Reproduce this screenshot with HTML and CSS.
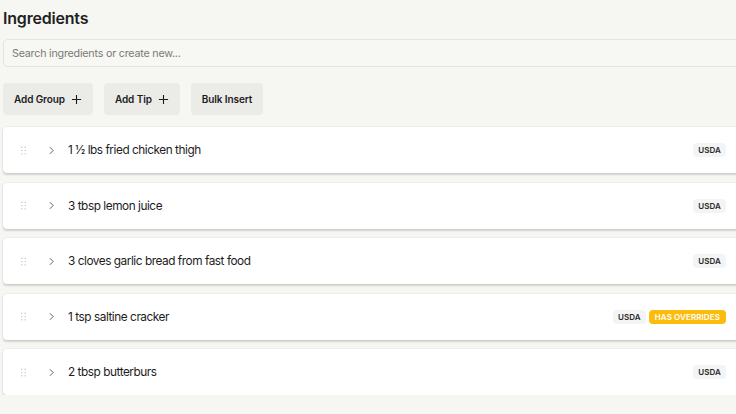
FILE: index.html
```html
<!DOCTYPE html>
<html lang="en">
<head>
  <meta charset="UTF-8" />
  <meta name="viewport" content="width=device-width, initial-scale=1" />
  <title>Ingredients</title>
  <link rel="stylesheet" href="styles.css">
</head>
<body>
  <div class="panel">
    <h1 class="panel-title">Ingredients</h1>
    <input class="search" type="text" placeholder="Search ingredients or create new..." />

    <div class="actions">
      <button class="action-btn" type="button">Add Group
        <svg class="plus" viewBox="0 0 12 12" aria-hidden="true"><path d="M6 1v10M1 6h10"/></svg>
      </button>
      <button class="action-btn" type="button">Add Tip
        <svg class="plus" viewBox="0 0 12 12" aria-hidden="true"><path d="M6 1v10M1 6h10"/></svg>
      </button>
      <button class="action-btn" type="button">Bulk Insert</button>
    </div>

    <ul class="ingredients">
      <li class="ingredient">
        <svg class="handle" viewBox="0 0 6 10" aria-hidden="true">
          <circle cx="1" cy="1" r=".7"/><circle cx="5" cy="1" r=".7"/>
          <circle cx="1" cy="5" r=".7"/><circle cx="5" cy="5" r=".7"/>
          <circle cx="1" cy="9" r=".7"/><circle cx="5" cy="9" r=".7"/>
        </svg>
        <svg class="chevron" viewBox="0 0 6 10" aria-hidden="true"><path d="M1 1l4 4-4 4"/></svg>
        <span class="ingredient-name">1 ½ lbs fried chicken thigh</span>
        <span class="badges"><span class="badge">USDA</span></span>
      </li>
      <li class="ingredient">
        <svg class="handle" viewBox="0 0 6 10" aria-hidden="true">
          <circle cx="1" cy="1" r=".7"/><circle cx="5" cy="1" r=".7"/>
          <circle cx="1" cy="5" r=".7"/><circle cx="5" cy="5" r=".7"/>
          <circle cx="1" cy="9" r=".7"/><circle cx="5" cy="9" r=".7"/>
        </svg>
        <svg class="chevron" viewBox="0 0 6 10" aria-hidden="true"><path d="M1 1l4 4-4 4"/></svg>
        <span class="ingredient-name">3 tbsp lemon juice</span>
        <span class="badges"><span class="badge">USDA</span></span>
      </li>
      <li class="ingredient">
        <svg class="handle" viewBox="0 0 6 10" aria-hidden="true">
          <circle cx="1" cy="1" r=".7"/><circle cx="5" cy="1" r=".7"/>
          <circle cx="1" cy="5" r=".7"/><circle cx="5" cy="5" r=".7"/>
          <circle cx="1" cy="9" r=".7"/><circle cx="5" cy="9" r=".7"/>
        </svg>
        <svg class="chevron" viewBox="0 0 6 10" aria-hidden="true"><path d="M1 1l4 4-4 4"/></svg>
        <span class="ingredient-name">3 cloves garlic bread from fast food</span>
        <span class="badges"><span class="badge">USDA</span></span>
      </li>
      <li class="ingredient">
        <svg class="handle" viewBox="0 0 6 10" aria-hidden="true">
          <circle cx="1" cy="1" r=".7"/><circle cx="5" cy="1" r=".7"/>
          <circle cx="1" cy="5" r=".7"/><circle cx="5" cy="5" r=".7"/>
          <circle cx="1" cy="9" r=".7"/><circle cx="5" cy="9" r=".7"/>
        </svg>
        <svg class="chevron" viewBox="0 0 6 10" aria-hidden="true"><path d="M1 1l4 4-4 4"/></svg>
        <span class="ingredient-name">1 tsp saltine cracker</span>
        <span class="badges"><span class="badge">USDA</span><span class="badge badge-warn">HAS OVERRIDES</span></span>
      </li>
      <li class="ingredient">
        <svg class="handle" viewBox="0 0 6 10" aria-hidden="true">
          <circle cx="1" cy="1" r=".7"/><circle cx="5" cy="1" r=".7"/>
          <circle cx="1" cy="5" r=".7"/><circle cx="5" cy="5" r=".7"/>
          <circle cx="1" cy="9" r=".7"/><circle cx="5" cy="9" r=".7"/>
        </svg>
        <svg class="chevron" viewBox="0 0 6 10" aria-hidden="true"><path d="M1 1l4 4-4 4"/></svg>
        <span class="ingredient-name">2 tbsp butterburs</span>
        <span class="badges"><span class="badge">USDA</span></span>
      </li>
    </ul>
  </div>
</body>
</html>
```

FILE: styles.css
```css
html, body {
  margin: 0;
  padding: 0;
  background: #f6f6f2;
  font-family: Inter, "Noto Sans", sans-serif;
  color: #1c1c1c;
  -webkit-font-smoothing: antialiased;
  overflow: hidden;
}
.panel {
  width: 745px;
  padding: 7px 0 0 3px;
}
.panel-title {
  margin: 0;
  font-size: 16px;
  font-weight: 600;
  line-height: 22px;
  letter-spacing: -0.2px;
  color: #1f1f1f;
}
.search {
  display: block;
  box-sizing: border-box;
  width: 100%;
  height: 28px;
  margin-top: 10px;
  padding: 0 8px;
  border: 1px solid #e4e4df;
  border-radius: 5px;
  background: #f7f7f3;
  font-family: inherit;
  font-size: 10.7px;
  letter-spacing: -0.2px;
  color: #222;
  outline: none;
}
.search::placeholder {
  color: #7a7a76;
}
.actions {
  display: flex;
  gap: 11px;
  margin-top: 16px;
}
.action-btn {
  display: flex;
  align-items: center;
  gap: 6px;
  height: 32px;
  padding: 0 11px;
  border: none;
  border-radius: 4px;
  background: #ebebe8;
  font-family: inherit;
  font-size: 10px;
  font-weight: 600;
  letter-spacing: -0.1px;
  color: #1c1c1c;
  cursor: pointer;
}
.plus {
  width: 11px;
  height: 11px;
  stroke: #1c1c1c;
  stroke-width: 1.2;
  fill: none;
}
.ingredients {
  list-style: none;
  margin: 12px 0 0 0;
  padding: 0;
  display: flex;
  flex-direction: column;
  gap: 9.5px;
}
.ingredient {
  display: flex;
  align-items: center;
  height: 46px;
  padding: 0 22px 0 18px;
  background: #fff;
  border-radius: 4px;
  box-shadow: 0 0 0 1px rgba(0,0,0,0.03), 0 1.5px 2px rgba(0,0,0,0.14);
}
.handle {
  width: 5px;
  height: 9px;
  fill: #a9a9a6;
}
.chevron {
  width: 5px;
  height: 9px;
  margin-left: 23px;
  stroke: #555;
  stroke-width: 1.1;
  fill: none;
}
.ingredient-name {
  margin-left: 14px;
  font-size: 11.8px;
  letter-spacing: -0.45px;
  color: #1c1c1c;
}
.badges {
  margin-left: auto;
  display: flex;
  gap: 3px;
}
.badge {
  padding: 2px 5px;
  border-radius: 4px;
  background: #f3f4f5;
  font-size: 8px;
  font-weight: 600;
  line-height: 10px;
  color: #2a2a2a;
  letter-spacing: 0.1px;
}
.badge-warn {
  background: #fbbc0d;
  color: #fff;
  padding: 2px 6px;
}
```
